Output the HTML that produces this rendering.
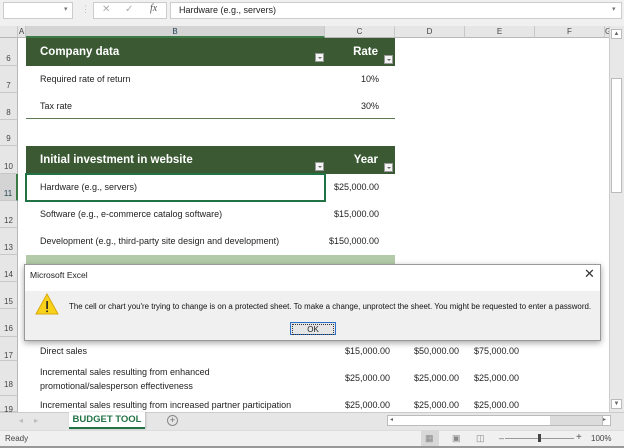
<!DOCTYPE html>
<html><head><meta charset="utf-8"><style>
*{margin:0;padding:0;box-sizing:border-box}
body{width:624px;height:448px;overflow:hidden;background:#fff;font-family:"Liberation Sans",sans-serif;font-size:9px;color:#222;position:relative}
.a{position:absolute}
.rh{position:absolute;left:0;width:18px;background:#e6e6e6;border-bottom:1px solid #c8c8c8;border-right:1px solid #b8b8b8;font-size:8px;color:#444;text-align:center}
.ch{position:absolute;top:26px;height:12px;background:#e6e6e6;border-right:1px solid #c8c8c8;border-bottom:1px solid #b8b8b8;font-size:8px;color:#444;text-align:center;line-height:11px}
.t{position:absolute;font-size:9px;color:#222;white-space:nowrap}
.r{text-align:right}
.gh{position:absolute;left:26px;width:369px;background:#3b5a34;color:#fff;font-weight:bold;font-size:11.5px}
.dd{position:absolute;width:9px;height:9px;background:#f4f4f4;border:1px solid #999}
.dd:after{content:"";position:absolute;left:2px;top:3px;border-left:2px solid transparent;border-right:2px solid transparent;border-top:2px solid #666}
</style></head><body>
<div class="a" style="left:0;top:0;width:624px;height:26px;background:#f0f0f0"></div>
<div class="a" style="left:3px;top:2px;width:70px;height:17px;background:#fff;border:1px solid #ccc"></div>
<div class="t" style="left:64px;top:5px;font-size:7px;color:#777">▾</div>
<div class="t" style="left:81px;top:4px;color:#bbb">⋮</div>
<div class="a" style="left:93px;top:2px;width:74px;height:17px;background:#fff;border:1px solid #ccc"></div>
<div class="t" style="left:102px;top:4px;color:#aaa;font-size:10px">✕</div>
<div class="t" style="left:125px;top:4px;color:#aaa;font-size:10px">✓</div>
<div class="t" style="left:150px;top:3px;color:#555;font-style:italic;font-family:'Liberation Serif',serif;font-size:10px">fx</div>
<div class="a" style="left:170px;top:2px;width:452px;height:17px;background:#fff;border:1px solid #ccc"></div>
<div class="t" style="left:179px;top:5px">Hardware (e.g., servers)</div>
<div class="t" style="left:612px;top:5px;font-size:7px;color:#777">▾</div>
<div class="ch" style="left:0;width:18px"></div>
<div class="ch" style="left:18px;width:8px">A</div>
<div class="ch" style="left:26px;width:299px;background:#d4d4d4;border-bottom:2px solid #3b7a45;color:#245">B</div>
<div class="ch" style="left:325px;width:70px">C</div>
<div class="ch" style="left:395px;width:70px">D</div>
<div class="ch" style="left:465px;width:70px">E</div>
<div class="ch" style="left:535px;width:70px">F</div>
<div class="ch" style="left:605px;width:5px;overflow:hidden">G</div>
<div class="rh" style="top:38px;height:28px;line-height:42px">6</div>
<div class="rh" style="top:66px;height:27px;line-height:40px">7</div>
<div class="rh" style="top:93px;height:27px;line-height:40px">8</div>
<div class="rh" style="top:120px;height:26px;line-height:38px">9</div>
<div class="rh" style="top:146px;height:28px;line-height:42px">10</div>
<div class="rh" style="top:174px;height:27px;line-height:40px;background:#d4d4d4;color:#245;border-right:2px solid #3b7a45">11</div>
<div class="rh" style="top:201px;height:27px;line-height:40px">12</div>
<div class="rh" style="top:228px;height:27px;line-height:40px">13</div>
<div class="rh" style="top:255px;height:27px;line-height:40px">14</div>
<div class="rh" style="top:282px;height:27px;line-height:40px">15</div>
<div class="rh" style="top:309px;height:28px;line-height:40px">16</div>
<div class="rh" style="top:337px;height:24px;line-height:38px">17</div>
<div class="rh" style="top:361px;height:35px;line-height:48px">18</div>
<div class="rh" style="top:396px;height:16px;line-height:28px">19</div>
<div class="gh" style="top:38px;height:28px"><span class="a" style="left:14px;top:8px">Company data</span><span class="a" style="right:17px;top:8px">Rate</span></div>
<div class="dd" style="left:315px;top:53px"></div><div class="dd" style="left:384px;top:55px"></div>
<div class="t" style="left:40px;top:74px">Required rate of return</div><div class="t r" style="left:325px;width:54px;top:74px">10%</div>
<div class="t" style="left:40px;top:101px">Tax rate</div><div class="t r" style="left:325px;width:54px;top:101px">30%</div>
<div class="a" style="left:26px;top:118px;width:369px;height:1px;background:#5b7a52"></div>
<div class="gh" style="top:146px;height:28px"><span class="a" style="left:14px;top:8px">Initial investment in website</span><span class="a" style="right:17px;top:8px">Year</span></div>
<div class="dd" style="left:315px;top:162px"></div><div class="dd" style="left:384px;top:163px"></div>
<div class="a" style="left:25px;top:173px;width:301px;height:29px;border:2px solid #217346"></div>
<div class="t" style="left:40px;top:182px">Hardware (e.g., servers)</div><div class="t r" style="left:325px;width:54px;top:182px">$25,000.00</div>
<div class="t" style="left:40px;top:209px">Software (e.g., e-commerce catalog software)</div><div class="t r" style="left:325px;width:54px;top:209px">$15,000.00</div>
<div class="t" style="left:40px;top:236px">Development (e.g., third-party site design and development)</div><div class="t r" style="left:310px;width:69px;top:236px">$150,000.00</div>
<div class="a" style="left:26px;top:255px;width:369px;height:12px;background:#b3cba8"></div>
<div class="t" style="left:40px;top:346px">Direct sales</div>
<div class="t r" style="left:325px;width:65px;top:346px">$15,000.00</div><div class="t r" style="left:395px;width:64px;top:346px">$50,000.00</div><div class="t r" style="left:465px;width:54px;top:346px">$75,000.00</div>
<div class="t" style="left:40px;top:365px;line-height:14px">Incremental sales resulting from enhanced<br>promotional/salesperson effectiveness</div>
<div class="t r" style="left:325px;width:65px;top:373px">$25,000.00</div><div class="t r" style="left:395px;width:64px;top:373px">$25,000.00</div><div class="t r" style="left:465px;width:54px;top:373px">$25,000.00</div>
<div class="t" style="left:40px;top:400px">Incremental sales resulting from increased partner participation</div>
<div class="t r" style="left:325px;width:65px;top:400px">$25,000.00</div><div class="t r" style="left:395px;width:64px;top:400px">$25,000.00</div><div class="t r" style="left:465px;width:54px;top:400px">$25,000.00</div>
<div class="a" style="left:609px;top:26px;width:15px;height:386px;background:#e8e8e8;border-left:1px solid #ccc"></div>
<div class="a" style="left:611px;top:29px;width:11px;height:10px;background:#fff;border:1px solid #bbb;font-size:6px;text-align:center;line-height:8px;color:#666">▲</div>
<div class="a" style="left:611px;top:78px;width:11px;height:115px;background:#fff;border:1px solid #bbb"></div>
<div class="a" style="left:611px;top:399px;width:11px;height:10px;background:#fff;border:1px solid #bbb;font-size:6px;text-align:center;line-height:8px;color:#666">▼</div>
<div class="a" style="left:24px;top:264px;width:577px;height:77px;background:#f0f0f0;border:1px solid #999;box-shadow:0 2px 6px rgba(0,0,0,.35)"></div>
<div class="a" style="left:25px;top:265px;width:575px;height:26px;background:#fff"></div>
<div class="t" style="left:30px;top:270px;font-size:8.5px">Microsoft Excel</div>
<div class="t" style="left:584px;top:266px;font-size:13px;color:#333">✕</div>
<svg class="a" style="left:35px;top:293px" width="24" height="22"><path d="M12 1 L23 21 L1 21 Z" fill="#f8d21a" stroke="#d9a90a" stroke-width="1"/><rect x="11.3" y="8" width="1.6" height="8" fill="#222"/><rect x="11.3" y="17.5" width="1.6" height="1.6" fill="#222"/></svg>
<div class="t" style="left:69px;top:302px;font-size:7.9px;color:#111">The cell or chart you're trying to change is on a protected sheet. To make a change, unprotect the sheet. You might be requested to enter a password.</div>
<div class="a" style="left:290px;top:322px;width:46px;height:13px;background:#e5e5e5;border:1px solid #2a6fc9;font-size:8px;text-align:center;line-height:11px"><div style="margin:1px;border:1px dotted #333;line-height:9px">OK</div></div>
<div class="a" style="left:0;top:412px;width:624px;height:18px;background:#e6e6e6;border-top:1px solid #ccc"></div>
<div class="t" style="left:19px;top:416px;color:#bbb;font-size:8px">◂&nbsp;&nbsp;&nbsp;&nbsp;&nbsp;▸</div>
<div class="a" style="left:69px;top:412px;width:76px;height:17px;background:#fff;border-bottom:2px solid #217346;box-shadow:1px 0 2px rgba(0,0,0,.2);color:#217346;font-weight:bold;font-size:9.5px;text-align:center;line-height:16px">BUDGET TOOL</div>
<div class="a" style="left:167px;top:415px;width:11px;height:11px;border:1px solid #888;border-radius:50%;font-size:9px;line-height:9px;text-align:center;color:#666">+</div>
<div class="a" style="left:387px;top:415px;width:222px;height:11px;background:#fff;border:1px solid #bbb;font-size:6px;line-height:9px;color:#666;padding-left:2px">◂</div>
<div class="a" style="left:550px;top:416px;width:52px;height:9px;background:#dcdcdc"></div>
<div class="a" style="left:602px;top:415px;width:9px;height:11px;background:#fff;border:1px solid #bbb;font-size:6px;line-height:9px;color:#666">▸</div>
<div class="a" style="left:0;top:430px;width:624px;height:18px;background:#f0f0f0;border-top:1px solid #ddd;border-bottom:2px solid #999"></div>
<div class="t" style="left:5px;top:434px;font-size:8px;color:#444">Ready</div>
<div class="a" style="left:421px;top:430px;width:18px;height:16px;background:#d8d8d8"></div>
<div class="t" style="left:425px;top:433px;font-size:9px;color:#888">▦</div>
<div class="t" style="left:452px;top:433px;font-size:9px;color:#888">▣</div>
<div class="t" style="left:476px;top:433px;font-size:9px;color:#888">◫</div>
<div class="t" style="left:499px;top:433px;font-size:9px;color:#666">–</div>
<div class="a" style="left:505px;top:438px;width:69px;height:1px;background:#999"></div>
<div class="a" style="left:538px;top:434px;width:3px;height:8px;background:#444"></div>
<div class="t" style="left:576px;top:432px;font-size:10px;color:#555">+</div>
<div class="t" style="left:591px;top:434px;font-size:8px;color:#444">100%</div>
</body></html>
